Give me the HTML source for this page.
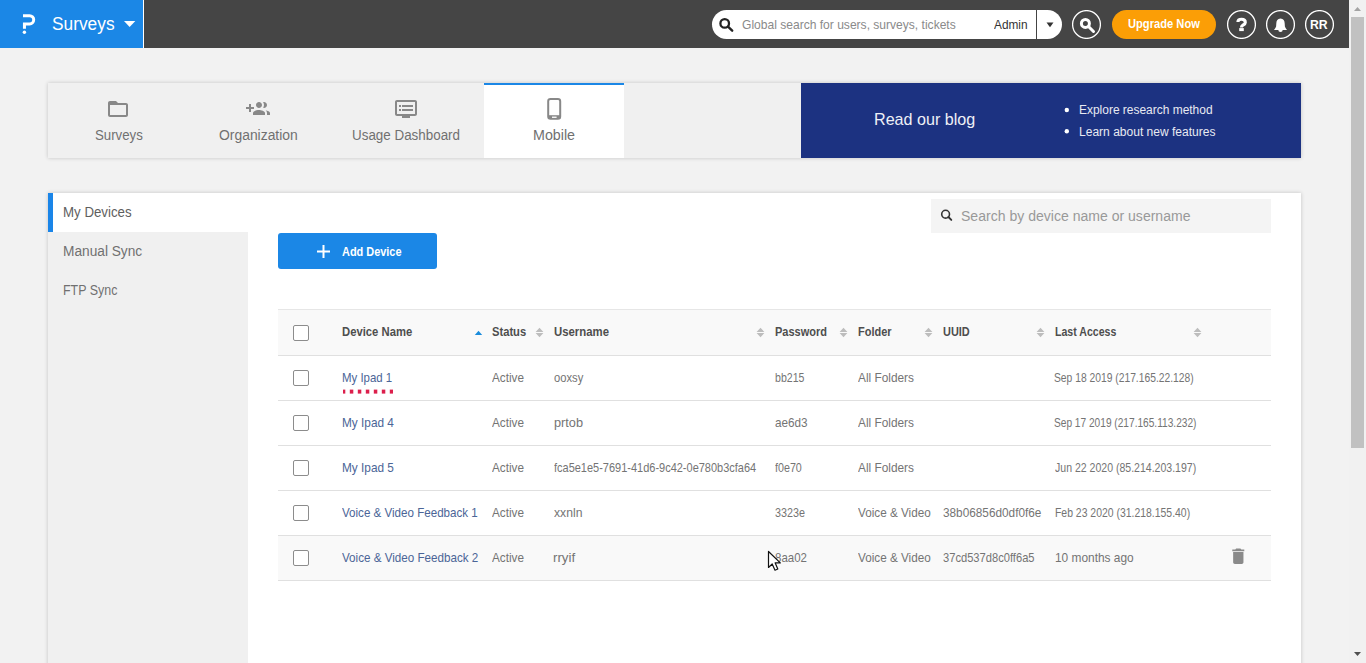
<!DOCTYPE html>
<html><head><meta charset="utf-8">
<style>
*{box-sizing:border-box;margin:0;padding:0}
html,body{width:1366px;height:663px;overflow:hidden;background:#f2f2f2;font-family:"Liberation Sans",sans-serif}
.a{position:absolute}
#hdr{left:0;top:0;width:1349px;height:48px;background:#454545}
#logo{left:0;top:0;width:143px;height:48px;background:#1b87e6}
#sep{left:143px;top:0;width:1px;height:48px;background:#fff}
.t{position:absolute;white-space:nowrap;line-height:1;transform-origin:0 0}
#sb{left:1349px;top:0;width:17px;height:663px;background:#f1f1f1}
#thumb{left:1351px;top:17px;width:13px;height:431px;background:#c1c1c1}
.tab{font-size:14px;color:#707070}
.blog{font-size:12px;color:#e8eaf2}
.side{font-size:14px;color:#707070}
.cb{width:16px;height:16px;border:1px solid #8c8c8c;border-radius:2px;background:#fff}
.th{font-size:13px;color:#4e4e4e;font-weight:bold}
.td{font-size:13px;color:#747474}
.lk{color:#4b6597}
.card{position:absolute;box-shadow:0 0 4px rgba(0,0,0,.2)}
</style></head><body>
<div id="hdr" class="a"></div>
<div id="logo" class="a"></div>
<div id="sep" class="a"></div>
<svg class="a" style="left:0;top:0" width="143" height="48">
<path d="M23,15.7 H29.6 A4.1,4.1 0 0 1 29.6,23.9 H24.45 V28.8" stroke="#fff" stroke-width="3" fill="none"/>
<circle cx="24.4" cy="32.2" r="1.7" fill="#fff"/>
<path d="M124,21 H135.3 L129.65,27 Z" fill="#fff"/>
</svg>
<div class="t" style="transform:scaleX(0.9619);left:52.30px;top:15px;font-size:18px;color:#fff">Surveys</div>

<!-- search -->
<div class="a" style="left:712px;top:10px;width:350px;height:29px;background:#fff;border-radius:15px"></div>
<div class="a" style="left:1036px;top:10px;width:1px;height:29px;background:#444"></div>
<svg class="a" style="left:712px;top:10px" width="350" height="29">
<circle cx="12.7" cy="13.4" r="4.3" stroke="#222" stroke-width="2.3" fill="none"/>
<path d="M16,16.7 L20.2,20.7" stroke="#222" stroke-width="2.4" stroke-linecap="round"/>
<path d="M334.5,12.6 H341.5 L338,17.2 Z" fill="#333"/>
</svg>
<div class="t" style="transform:scaleX(0.9274);left:742.42px;top:18px;font-size:13px;color:#8a8a8a">Global search for users, surveys, tickets</div>
<div class="t" style="transform:scaleX(0.9108);left:994.19px;top:18px;font-size:13px;color:#333">Admin</div>

<!-- circle buttons -->
<svg class="a" style="left:1072px;top:10px" width="29" height="29"><circle cx="14.5" cy="14.5" r="13.9" stroke="#fff" stroke-width="1.3" fill="none"/></svg>
<svg class="a" style="left:1072px;top:10px" width="29" height="29">
<circle cx="13.4" cy="13.4" r="4" stroke="#fff" stroke-width="3" fill="none"/>
<path d="M16.5,16.5 L21.5,21.5" stroke="#fff" stroke-width="3" stroke-linecap="round"/>
</svg>
<div class="a" style="left:1112px;top:10px;width:104px;height:29px;background:#fb9e06;border-radius:15px"></div>
<div class="t" style="transform:scaleX(0.8583);left:1127.63px;top:17px;font-size:13px;color:#fff;font-weight:bold">Upgrade Now</div>

<svg class="a" style="left:1227px;top:10px" width="29" height="29"><circle cx="14.5" cy="14.5" r="13.9" stroke="#fff" stroke-width="1.3" fill="none"/></svg>
<svg class="a" style="left:1228px;top:10px" width="28" height="28"><path d="M9.9,12 C9.9,9.6 11.4,9.3 13.6,9.3 C16,9.3 17.3,10.5 17.3,12.4 C17.3,14.8 13.5,15 13.5,17.1 V17.4" stroke="#fff" stroke-width="3.1" fill="none"/><rect x="11.2" y="18.1" width="4.6" height="3" fill="#fff"/></svg>
<svg class="a" style="left:1266px;top:10px" width="29" height="29"><circle cx="14.5" cy="14.5" r="13.9" stroke="#fff" stroke-width="1.3" fill="none"/></svg>
<svg class="a" style="left:1266px;top:10px" width="29" height="29">
<path d="M14.5,8.6 C11.5,8.8 10.4,11 10.3,13.5 L10.1,16.5 C9.6,18 8.6,19 8,19.9 H21 C20.4,19 19.4,18 18.9,16.5 L18.7,13.5 C18.6,11 17.5,8.8 14.5,8.6 Z" fill="#fff"/>
<path d="M12.3,19.9 H16.7 A2.2,2.1 0 0 1 12.3,19.9 Z" fill="#fff"/>
</svg>
<svg class="a" style="left:1305px;top:10px" width="29" height="29"><circle cx="14.5" cy="14.5" r="13.9" stroke="#fff" stroke-width="1.3" fill="none"/></svg>
<div class="t" style="transform:scaleX(0.9444);left:1310.11px;top:18px;font-size:13px;color:#fff;font-weight:bold">RR</div>

<!-- scrollbar -->
<div id="sb" class="a"></div>
<div id="thumb" class="a"></div>
<svg class="a" style="left:1349px;top:0" width="17" height="663">
<path d="M5,11 L8.5,7 L12,11 Z" fill="#a3a3a3"/>
<path d="M5,652 L8.5,656 L12,652 Z" fill="#505050"/>
</svg>

<!-- tabs card -->
<div class="card" style="left:48px;top:83px;width:1253px;height:75px;background:#f0f0f0"></div>
<div class="a" style="left:484px;top:83px;width:140px;height:75px;background:#fff;border-top:2px solid #1b87e6"></div>
<div class="a" style="left:801px;top:83px;width:500px;height:75px;background:#1c3281"></div>


<!-- tabs -->
<svg class="a" style="left:105.9px;top:96.9px" width="24" height="24" viewBox="0 0 24 24"><path fill="#888" d="M20 6h-8l-2-2H4c-1.1 0-1.99.9-1.99 2L2 18c0 1.1.9 2 2 2h16c1.1 0 2-.9 2-2V8c0-1.1-.9-2-2-2zm0 12H4V8h16v10z"/></svg>
<svg class="a" style="left:245.8px;top:97px" width="24" height="24" viewBox="0 0 24 24"><path fill="#888" d="M8 10H5V7H3v3H0v2h3v3h2v-3h3v-2zm10 1c1.66 0 2.99-1.34 2.99-3S19.66 5 18 5c-.32 0-.63.05-.91.14.57.81.9 1.790.9 2.86s-.34 2.04-.9 2.860c.28.09.59.14.91.14zm-5 0c1.66 0 2.99-1.34 2.99-3S14.66 5 13 5c-1.66 0-3 1.34-3 3s1.34 3 3 3zm6.62 2.16c.83.73 1.38 1.66 1.380 2.84v2h3v-2c0-1.54-2.37-2.49-4.38-2.84zM13 13c-2 0-6 1-6 3v2h12v-2c0-2-4-3-6-3z"/></svg>
<svg class="a" style="left:394.1px;top:96.9px" width="24" height="24" viewBox="0 0 24 24"><path fill="#888" d="M21 3H3c-1.1 0-2 .9-2 2v12c0 1.1.9 2 2 2h5v2h8v-2h5c1.1 0 1.99-.9 1.99-2L23 5c0-1.1-.9-2-2-2zm0 14H3V5h18v12zm-2-9H8v2h11V8zm0 4H8v2h11v-2zM7 8H5v2h2V8zm0 4H5v2h2v-2z"/></svg>
<svg class="a" style="left:48px;top:83px" width="753" height="75">
<g>
<rect x="500.2" y="16" width="12" height="19.8" rx="2.3" fill="none" stroke="#888" stroke-width="2"/>
<rect x="500.2" y="32.2" width="12" height="3.8" fill="#888"/>
<rect x="504" y="33.6" width="4.6" height="1.3" fill="#fff"/>
</g>
</svg>
<div class="t tab" style="transform:scaleX(0.9440);left:94.65px;top:128px">Surveys</div>
<div class="t tab" style="transform:scaleX(0.9924);left:219.20px;top:128px">Organization</div>
<div class="t tab" style="transform:scaleX(0.9571);left:351.85px;top:128px">Usage Dashboard</div>
<div class="t tab" style="transform:scaleX(1.0200);left:532.96px;top:128px">Mobile</div>
<div class="t" style="transform:scaleX(0.9486);left:874.13px;top:111px;font-size:17px;color:#eef0f6">Read our blog</div>
<svg class="a" style="left:1060px;top:100px" width="20" height="40"><circle cx="6.8" cy="10" r="2.2" fill="#fff"/><circle cx="6.8" cy="31.3" r="2.2" fill="#fff"/></svg>
<div class="t blog" style="transform:scaleX(0.9962);left:1078.80px;top:104px">Explore research method</div>
<div class="t blog" style="transform:scaleX(1.0030);left:1078.80px;top:126px">Learn about new features</div>

<!-- main card -->
<div class="card" style="left:48px;top:193px;width:1253px;height:480px;background:#fff"></div>
<div class="a" style="left:48px;top:232px;width:200px;height:440px;background:#f0f0f0"></div>
<div class="a" style="left:48px;top:193px;width:5px;height:39px;background:#1a85e8"></div>
<div class="t side" style="transform:scaleX(0.9479);left:62.52px;top:205px;color:#5e5e5e">My Devices</div>
<div class="t side" style="transform:scaleX(0.9785);left:63.2px;top:244px">Manual Sync</div>
<div class="t side" style="transform:scaleX(0.8883);left:62.64px;top:283px">FTP Sync</div>

<div class="a" style="left:278px;top:233px;width:159px;height:36px;background:#1b87e6;border-radius:3px"></div>
<svg class="a" style="left:278px;top:233px" width="159" height="36"><rect x="44.5" y="12" width="2" height="13" fill="#fff"/><rect x="39" y="17.5" width="13" height="2" fill="#fff"/></svg>
<div class="t" style="transform:scaleX(0.8408);left:342.37px;top:245px;font-size:13px;color:#fff;font-weight:bold">Add Device</div>

<div class="a" style="left:931px;top:199px;width:340px;height:34px;background:#f4f4f4"></div>
<svg class="a" style="left:931px;top:199px" width="40" height="34"><circle cx="14.6" cy="15.2" r="3.9" stroke="#333" stroke-width="1.6" fill="none"/><path d="M17.4,18 L20.3,20.9" stroke="#333" stroke-width="1.9" stroke-linecap="round"/></svg>
<div class="t" style="transform:scaleX(1.0031);left:960.60px;top:209px;font-size:14px;color:#999">Search by device name or username</div>
<div class="a" style="left:278px;top:309px;width:993px;height:47px;background:#f9f9f9;border-top:1px solid #e6e6e6;border-bottom:1px solid #e0e0e0"></div>
<div class="a" style="left:278px;top:356px;width:993px;height:45px;background:#fff;border-bottom:1px solid #e0e0e0"></div>
<div class="a" style="left:278px;top:401px;width:993px;height:45px;background:#fff;border-bottom:1px solid #e0e0e0"></div>
<div class="a" style="left:278px;top:446px;width:993px;height:45px;background:#fff;border-bottom:1px solid #e0e0e0"></div>
<div class="a" style="left:278px;top:491px;width:993px;height:45px;background:#fff;border-bottom:1px solid #e0e0e0"></div>
<div class="a" style="left:278px;top:536px;width:993px;height:45px;background:#f9f9f9;border-bottom:1px solid #e0e0e0"></div>
<div class="a cb" style="left:293px;top:325px"></div>
<div class="a cb" style="left:293px;top:370px"></div>
<div class="a cb" style="left:293px;top:415px"></div>
<div class="a cb" style="left:293px;top:460px"></div>
<div class="a cb" style="left:293px;top:505px"></div>
<div class="a cb" style="left:293px;top:550px"></div>
<div class="t th" style="transform:scaleX(0.8675);left:342.18px;top:325px">Device Name</div>
<div class="t th" style="transform:scaleX(0.8600);left:492.19px;top:325px">Status</div>
<div class="t th" style="transform:scaleX(0.8742);left:554.25px;top:325px">Username</div>
<div class="t th" style="transform:scaleX(0.8467);left:775.02px;top:325px">Password</div>
<div class="t th" style="transform:scaleX(0.8450);left:858.00px;top:325px">Folder</div>
<div class="t th" style="transform:scaleX(0.8406);left:943.00px;top:325px">UUID</div>
<div class="t th" style="transform:scaleX(0.8133);left:1054.70px;top:325px">Last Access</div>
<svg class="a" style="left:0;top:320px" width="1351" height="20"><path d="M474.8,15.1 H482.2 L478.5,10.7 Z" fill="#1a8cdc"/><path d="M535.6,12 H543.4 L539.5,7.8 Z M535.6,13 H543.4 L539.5,17.2 Z" fill="#bdbdbd"/><path d="M756.6,12 H764.4 L760.5,7.8 Z M756.6,13 H764.4 L760.5,17.2 Z" fill="#bdbdbd"/><path d="M839.6,12 H847.4 L843.5,7.8 Z M839.6,13 H847.4 L843.5,17.2 Z" fill="#bdbdbd"/><path d="M924.6,12 H932.4 L928.5,7.8 Z M924.6,13 H932.4 L928.5,17.2 Z" fill="#bdbdbd"/><path d="M1036.6,12 H1044.4 L1040.5,7.8 Z M1036.6,13 H1044.4 L1040.5,17.2 Z" fill="#bdbdbd"/><path d="M1193.6,12 H1201.4 L1197.5,7.8 Z M1193.6,13 H1201.4 L1197.5,17.2 Z" fill="#bdbdbd"/></svg>
<div class="t td lk" style="transform:scaleX(0.8789);left:342.16px;top:371px">My Ipad 1</div>
<div class="t td" style="transform:scaleX(0.9029);left:491.62px;top:371px">Active</div>
<div class="t td" style="transform:scaleX(0.8618);left:554.07px;top:371px">ooxsy</div>
<div class="t td" style="transform:scaleX(0.8139);left:775.04px;top:371px">bb215</div>
<div class="t td" style="transform:scaleX(0.9115);left:858.00px;top:371px">All Folders</div>
<div class="t td" style="transform:scaleX(0.7920);left:1054.37px;top:371px">Sep 18 2019 (217.165.22.128)</div>
<div class="t td lk" style="transform:scaleX(0.9089);left:341.75px;top:416px">My Ipad 4</div>
<div class="t td" style="transform:scaleX(0.9029);left:491.62px;top:416px">Active</div>
<div class="t td" style="transform:scaleX(0.9793);left:554.03px;top:416px">prtob</div>
<div class="t td" style="transform:scaleX(0.9029);left:774.86px;top:416px">ae6d3</div>
<div class="t td" style="transform:scaleX(0.9115);left:858.00px;top:416px">All Folders</div>
<div class="t td" style="transform:scaleX(0.7801);left:1054.39px;top:416px">Sep 17 2019 (217.165.113.232)</div>
<div class="t td lk" style="transform:scaleX(0.9089);left:341.75px;top:461px">My Ipad 5</div>
<div class="t td" style="transform:scaleX(0.9029);left:491.62px;top:461px">Active</div>
<div class="t td" style="transform:scaleX(0.8450);left:554.37px;top:461px">fca5e1e5-7691-41d6-9c42-0e780b3cfa64</div>
<div class="t td" style="transform:scaleX(0.8242);left:775.36px;top:461px">f0e70</div>
<div class="t td" style="transform:scaleX(0.9115);left:858.00px;top:461px">All Folders</div>
<div class="t td" style="transform:scaleX(0.8104);left:1054.91px;top:461px">Jun 22 2020 (85.214.203.197)</div>
<div class="t td lk" style="transform:scaleX(0.8914);left:342.19px;top:506px">Voice &amp; Video Feedback 1</div>
<div class="t td" style="transform:scaleX(0.9029);left:491.62px;top:506px">Active</div>
<div class="t td" style="transform:scaleX(0.9367);left:554.39px;top:506px">xxnln</div>
<div class="t td" style="transform:scaleX(0.8286);left:774.54px;top:506px">3323e</div>
<div class="t td" style="transform:scaleX(0.9012);left:858.00px;top:506px">Voice &amp; Video</div>
<div class="t td" style="transform:scaleX(0.9074);left:942.66px;top:506px">38b06856d0df0f6e</div>
<div class="t td" style="transform:scaleX(0.8024);left:1055.07px;top:506px">Feb 23 2020 (31.218.155.40)</div>
<div class="t td lk" style="transform:scaleX(0.8954);left:342.19px;top:551px">Voice &amp; Video Feedback 2</div>
<div class="t td" style="transform:scaleX(0.9029);left:491.62px;top:551px">Active</div>
<div class="t td" style="transform:scaleX(1.0238);left:553.36px;top:551px">rryif</div>
<div class="t td" style="transform:scaleX(0.8829);left:775.06px;top:551px">8aa02</div>
<div class="t td" style="transform:scaleX(0.9012);left:858.00px;top:551px">Voice &amp; Video</div>
<div class="t td" style="transform:scaleX(0.8575);left:942.70px;top:551px">37cd537d8c0ff6a5</div>
<div class="t td" style="transform:scaleX(0.9141);left:1054.93px;top:551px">10 months ago</div>
<svg class="a" style="left:342.5px;top:389px" width="50.5" height="6"><rect x="-1.2" y="0.6" width="3.5" height="4" fill="#dc1f4c"/><rect x="6.8" y="0.6" width="3.5" height="4" fill="#dc1f4c"/><rect x="14.8" y="0.6" width="3.5" height="4" fill="#dc1f4c"/><rect x="22.8" y="0.6" width="3.5" height="4" fill="#dc1f4c"/><rect x="30.8" y="0.6" width="3.5" height="4" fill="#dc1f4c"/><rect x="38.8" y="0.6" width="3.5" height="4" fill="#dc1f4c"/><rect x="46.8" y="0.6" width="3.5" height="4" fill="#dc1f4c"/></svg>
<svg class="a" style="left:1227.6px;top:546.1px" width="20.6" height="20.6" viewBox="0 0 24 24"><path fill="#8a8a8a" d="M6 19c0 1.1.9 2 2 2h8c1.1 0 2-.9 2-2V7H6v12zM19 4h-3.5l-1-1h-5l-1 1H5v2h14V4z"/></svg>
<svg class="a" style="left:767px;top:550px" width="16" height="22"><path d="M1.5,1.5 V17.5 L5.2,14 L8,20.2 L10.8,19 L8.2,12.9 H13.3 Z" fill="#fff" stroke="#111" stroke-width="1.2" stroke-linejoin="round"/></svg>

</body></html>
